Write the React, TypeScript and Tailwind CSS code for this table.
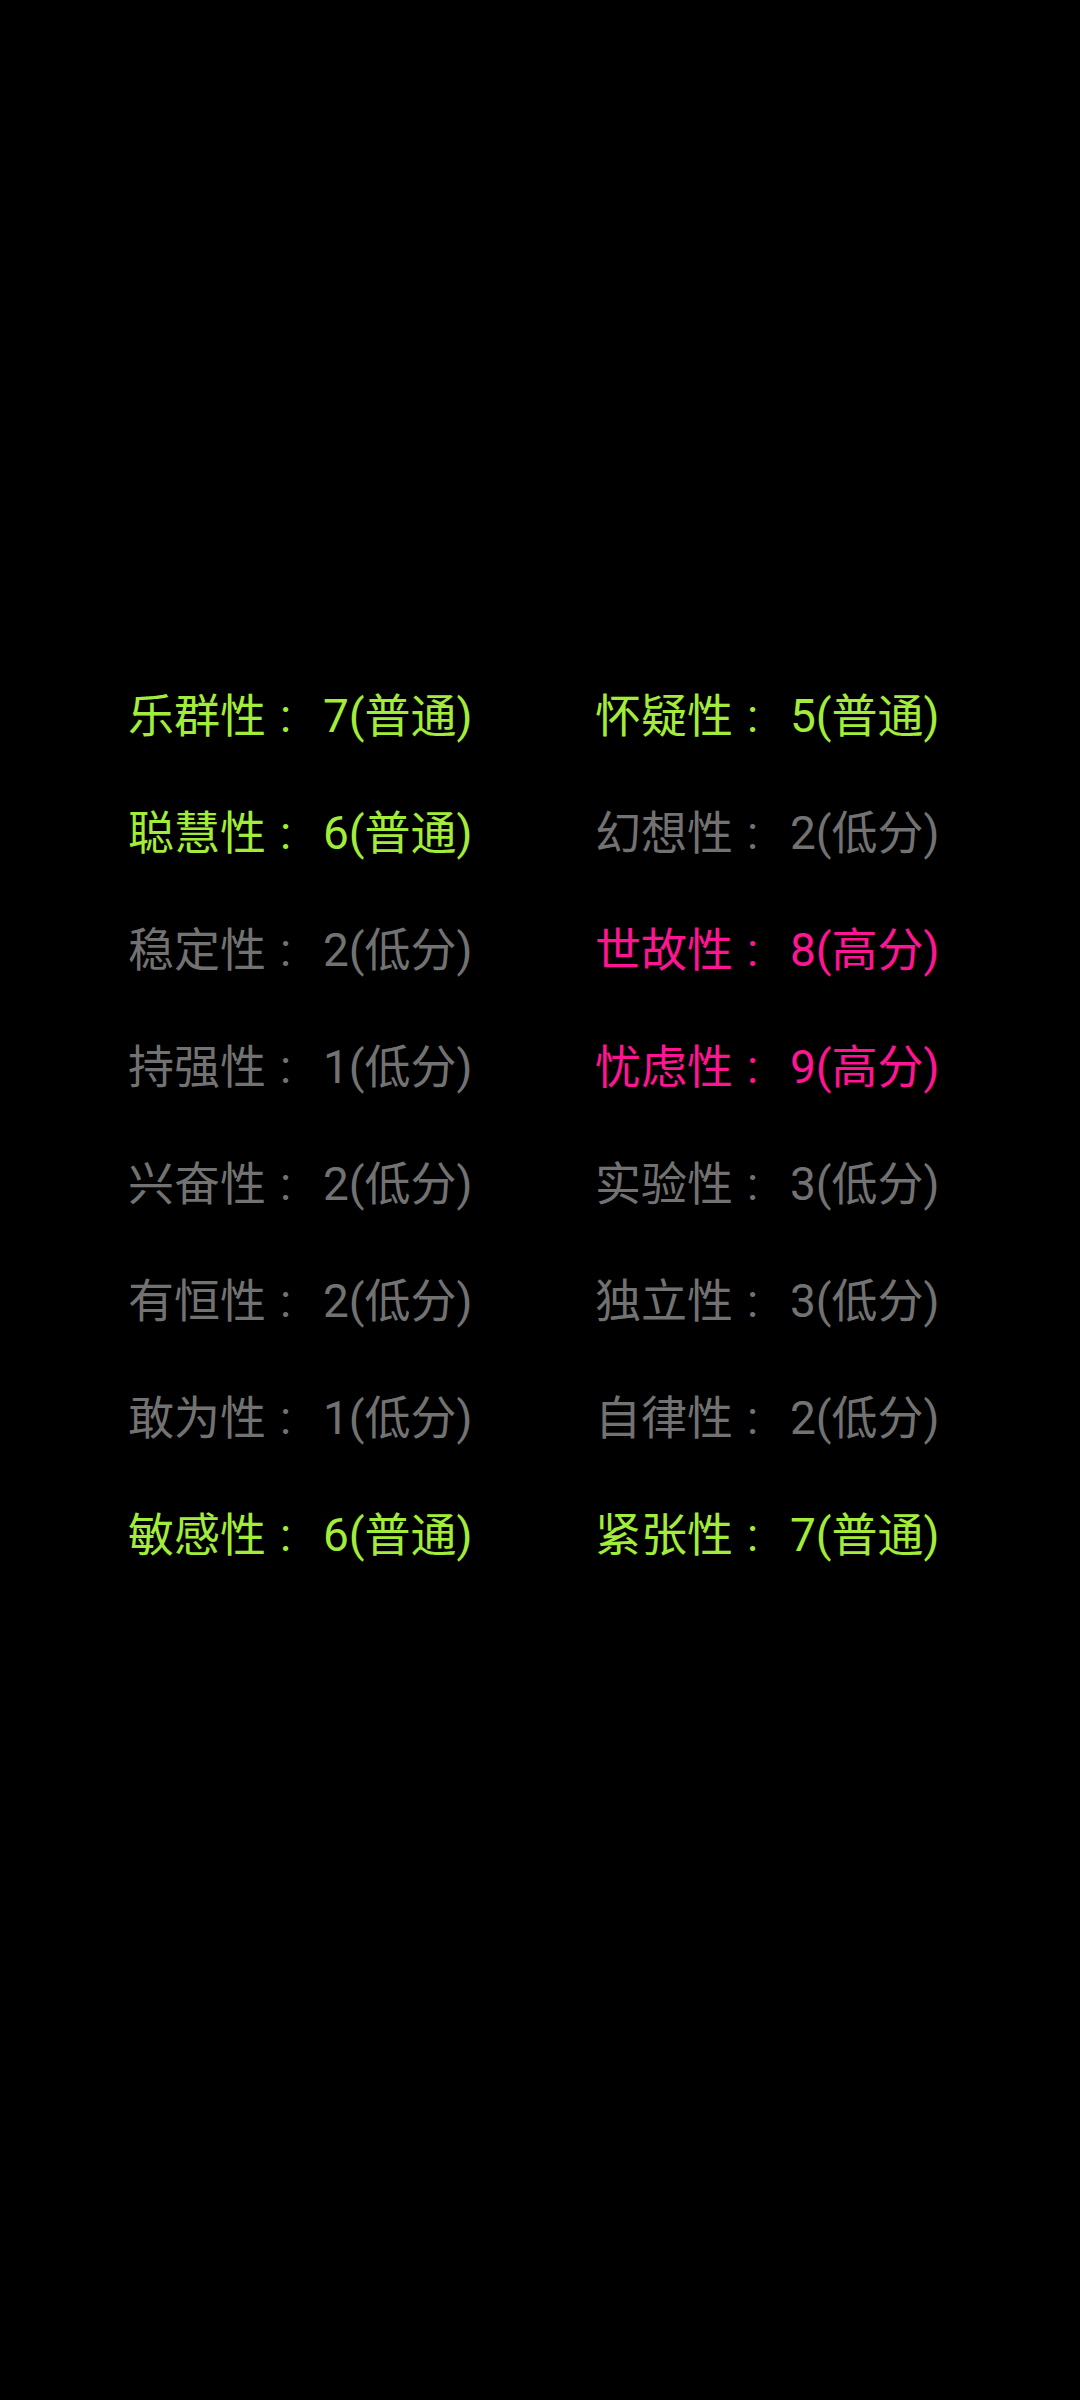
const rows: [string, string][] = [
  ["乐群性：7(普通)", "怀疑性：5(普通)"],
  ["聪慧性：6(普通)", "幻想性：2(低分)"],
  ["稳定性：2(低分)", "世故性：8(高分)"],
  ["持强性：1(低分)", "忧虑性：9(高分)"],
  ["兴奋性：2(低分)", "实验性：3(低分)"],
  ["有恒性：2(低分)", "独立性：3(低分)"],
  ["敢为性：1(低分)", "自律性：2(低分)"],
  ["敏感性：6(普通)", "紧张性：7(普通)"],
];

function tone(text: string) {
  if (text.includes("高分")) return "text-[#ff1493]";
  if (text.includes("普通")) return "text-[#a2ec3a]";
  return "text-[#727272]";
}

function Trait({ text }: { text: string }) {
  const [name, value] = text.split("：");
  return (
    <div className={tone(text)}>
      {name}
      {/* fullwidth colon cell */}
      <span className="inline-block w-[57px] pl-[14px]">:</span>
      {value}
    </div>
  );
}

export default function App() {
  return (
    <div className="min-h-[2400px] w-[1080px] bg-black pl-[128px] pt-[658px] font-['Roboto','Noto_Sans_CJK_SC',sans-serif]">
      <div className="grid grid-cols-[467px_467px] text-[46px] leading-[117px]">
        {rows.flatMap(([a, b]) => [
          <Trait key={a} text={a} />,
          <Trait key={b} text={b} />,
        ])}
      </div>
    </div>
  );
}
